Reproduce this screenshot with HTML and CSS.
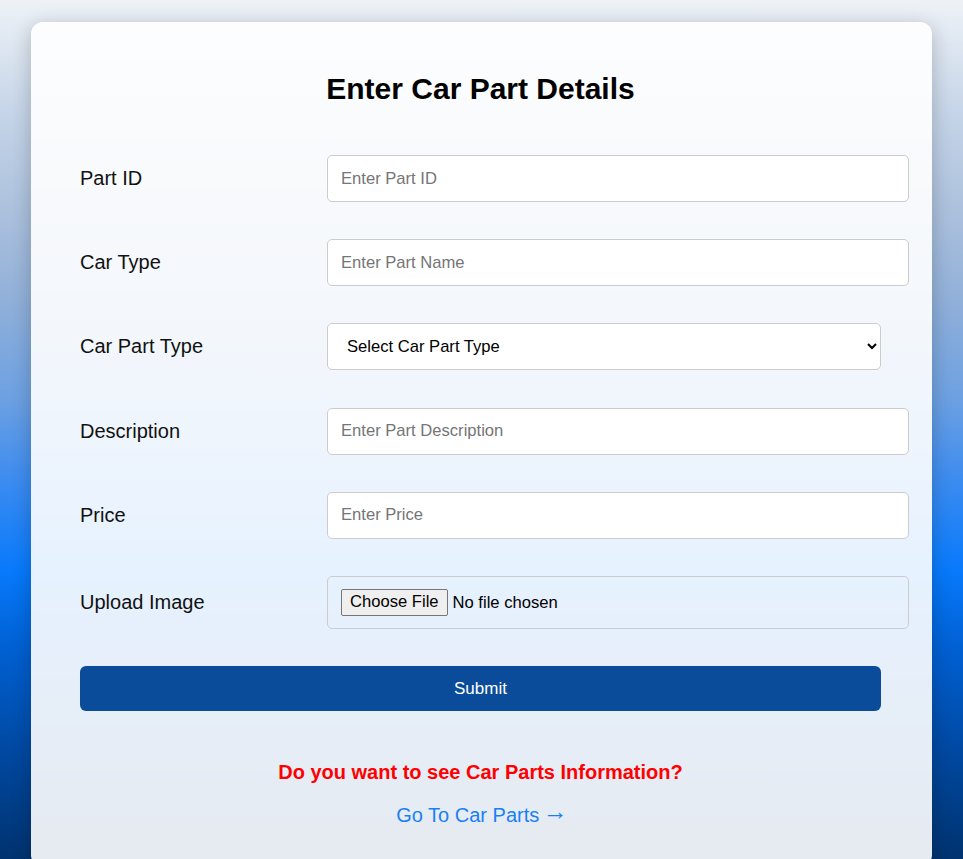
FILE: index.html
```html
<!DOCTYPE html>
<html lang="en">
<head>
<meta charset="utf-8">
<title>Enter Car Part Details</title>
<link rel="stylesheet" href="styles.css">
</head>
<body>
<div class="card">
  <h2 class="title">Enter Car Part Details</h2>
  <form class="form">
    <div class="row">
      <label class="label" for="pid">Part ID</label>
      <input class="field" id="pid" type="text" placeholder="Enter Part ID">
    </div>
    <div class="row">
      <label class="label" for="ctype">Car Type</label>
      <input class="field" id="ctype" type="text" placeholder="Enter Part Name">
    </div>
    <div class="row">
      <label class="label" for="ptype">Car Part Type</label>
      <select class="select" id="ptype">
        <option>Select Car Part Type</option>
        <option>Engine</option>
        <option>Brakes</option>
        <option>Suspension</option>
      </select>
    </div>
    <div class="row">
      <label class="label" for="desc">Description</label>
      <input class="field" id="desc" type="text" placeholder="Enter Part Description">
    </div>
    <div class="row">
      <label class="label" for="price">Price</label>
      <input class="field" id="price" type="text" placeholder="Enter Price">
    </div>
    <div class="row">
      <label class="label" for="img">Upload Image</label>
      <input class="file" id="img" type="file">
    </div>
    <button class="submit" type="button">Submit</button>
  </form>
  <p class="question">Do you want to see Car Parts Information?</p>
  <p class="link-wrap"><a class="link" href="#">Go To Car Parts <span class="arrow">→</span></a></p>
</div>
</body>
</html>
```

FILE: styles.css
```css
html {
  background: linear-gradient(to bottom,
    #eef2f7 0px,
    #c6d5e8 110px,
    #afc3de 200px,
    #91b0d9 300px,
    #6ca0e2 400px,
    #3c8cf0 480px,
    #087afc 570px,
    #0060d2 650px,
    #0049a2 750px,
    #00336f 859px,
    #002a5c 1100px);
  min-height: 100%;
}

body {
  margin: 0;
  padding: 22px 0 30px;
  font-family: "Liberation Sans", Arial, sans-serif;
}

.card {
  width: 901px;
  margin: 0 auto;
  box-sizing: border-box;
  padding: 50px 51px 40px 49px;
  background: rgba(255, 255, 255, 0.9);
  border-radius: 12px;
  box-shadow: 0 4px 20px rgba(0, 0, 0, 0.22);
}

.title {
  margin: 0 0 50px;
  text-align: center;
  font-size: 30px;
  font-weight: bold;
  color: #000;
  line-height: 33px;
}

.form {
  display: flex;
  flex-direction: column;
  gap: 37.2px;
}

.row {
  display: grid;
  grid-template-columns: 247px 1fr;
  align-items: center;
}

.label {
  font-size: 20px;
  color: #111;
}

.field {
  box-sizing: content-box;
  width: 100%;
  height: 19px;
  padding: 13px 13px;
  border: 1px solid #ccc;
  border-radius: 5px;
  background: #fff;
  font-family: "Liberation Sans", Arial, sans-serif;
  font-size: 16.6px;
  color: #000;
}

.field::placeholder {
  color: #757575;
}

.select {
  box-sizing: border-box;
  width: 100%;
  height: 47px;
  padding: 0 14px 0 15px;
  border: 1px solid #ccc;
  border-radius: 5px;
  background: #fff;
  font-family: "Liberation Sans", Arial, sans-serif;
  font-size: 16.6px;
  color: #000;
}

.file {
  box-sizing: content-box;
  width: 100%;
  height: 27px;
  padding: 12px 13px;
  border: 1px solid #ccc;
  border-radius: 5px;
  background: transparent;
  font-family: "Liberation Sans", Arial, sans-serif;
  font-size: 16.6px;
  color: #000;
}

.file::file-selector-button {
  height: 27px;
  margin-right: 5px;
  padding: 0 8px;
  border: 1px solid #767676;
  border-radius: 2px;
  background: #efefef;
  font: inherit;
  color: #000;
}

.submit {
  margin-top: 0;
  height: 45px;
  border: none;
  border-radius: 6px;
  background: #0a4c99;
  color: #fff;
  font-family: "Liberation Sans", Arial, sans-serif;
  font-size: 17px;
}

.question {
  margin: 50px 0 0;
  text-align: center;
  color: #ff0000;
  font-size: 20px;
  font-weight: bold;
  line-height: 23px;
}

.link-wrap {
  margin: 20px 0 0;
  text-align: center;
  font-size: 20px;
  line-height: 23px;
}

.link {
  color: #1a7ff5;
  text-decoration: none;
}

.arrow {
  display: inline-block;
  margin: 0 -3px 0 -2px;
  font-family: "Liberation Sans", Arial, sans-serif;
  font-size: 25px;
  line-height: 0;
  vertical-align: 2px;
}
```
